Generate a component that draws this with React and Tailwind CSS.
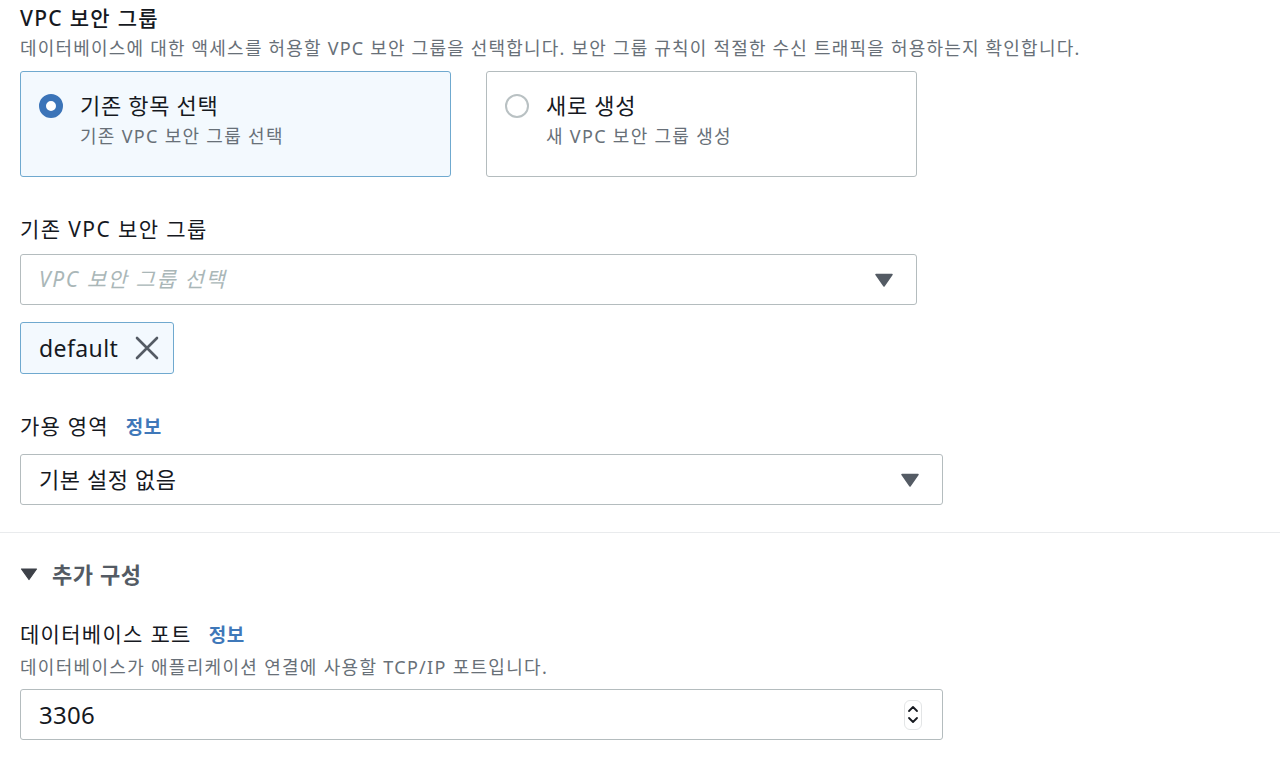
import React from 'react';

const font = { fontFamily: '"Noto Sans", "Noto Sans CJK KR", sans-serif' };

function Caret() {
  return (
    <svg width="18" height="14" viewBox="0 0 18 14">
      <path d="M1 1.5 H17 L9 13 Z" fill="#545b64" strokeLinejoin="round" stroke="#545b64" strokeWidth="1.5" />
    </svg>
  );
}

function Info() {
  return <span className="text-[19px] font-bold text-[#3f78b9] ml-[17px] tracking-[0.5px]">정보</span>;
}

function RadioCard({ selected, title, sub }) {
  return (
    <div
      className={
        selected
          ? 'w-[431px] h-[106px] rounded-[3px] border border-[#6fa9cf] bg-[#f3f9fe] flex items-start pl-[18px] pt-[18px]'
          : 'w-[431px] h-[106px] rounded-[3px] border border-[#b4bcbe] bg-white flex items-start pl-[18px] pt-[18px]'
      }
    >
      <div className="pt-[4px]">
        {selected ? (
          <div className="w-[24px] h-[24px] rounded-full border-[7px] border-[#3b74b8] bg-white" />
        ) : (
          <div className="w-[24px] h-[24px] rounded-full border-2 border-[#b9c1c3] bg-white" />
        )}
      </div>
      <div className="ml-[17px] flex flex-col">
        <span className="text-[22px] leading-[30px] text-[#16191f] tracking-[0.7px]">{title}</span>
        <span className="text-[18px] leading-[26px] text-[#687078] tracking-[1.3px] mt-[3px]">{sub}</span>
      </div>
    </div>
  );
}

export default function App() {
  return (
    <div className="w-[1280px] h-[761px] bg-white overflow-hidden" style={font}>
      <div className="pl-[20px] pt-[3px]">
        <div className="text-[21px] leading-[30px] font-medium text-[#16191f] tracking-[1.3px]">VPC 보안 그룹</div>
        <div className="text-[18px] leading-[26px] text-[#687078] tracking-[1.2px] mt-[2px] whitespace-nowrap">
          데이터베이스에 대한 액세스를 허용할 VPC 보안 그룹을 선택합니다. 보안 그룹 규칙이 적절한 수신 트래픽을 허용하는지 확인합니다.
        </div>
        <div className="flex gap-[35px] mt-[10px]">
          <RadioCard selected title="기존 항목 선택" sub="기존 VPC 보안 그룹 선택" />
          <RadioCard title="새로 생성" sub="새 VPC 보안 그룹 생성" />
        </div>

        <div className="text-[21px] leading-[30px] text-[#16191f] tracking-[1.4px] mt-[37px]">기존 VPC 보안 그룹</div>
        <div className="w-[897px] h-[51px] mt-[10px] rounded-[3px] border border-[#b4bcbe] flex items-center justify-between pl-[18px] pr-[23px]">
          <span className="text-[21px] italic text-[#aab7b8] tracking-[1.6px]">VPC 보안 그룹 선택</span>
          <Caret />
        </div>
        <div className="mt-[17px] w-[154px] h-[52px] rounded-[3px] border border-[#6fa9cf] bg-[#f3f9fe] flex items-center pl-[18px]">
          <span className="text-[23px] text-[#16191f] tracking-[0.4px]">default</span>
          <svg width="24" height="24" viewBox="0 0 24 24" className="ml-[17px]">
            <path d="M2 2 L22 22 M22 2 L2 22" stroke="#545b64" strokeWidth="2.6" strokeLinecap="round" />
          </svg>
        </div>

        <div className="flex items-center mt-[37px] h-[32px]">
          <span className="text-[21px] text-[#16191f] tracking-[1.2px]">가용 영역</span>
          <Info />
        </div>
        <div className="w-[923px] h-[51px] mt-[11px] rounded-[3px] border border-[#b4bcbe] flex items-center justify-between pl-[18px] pr-[23px]">
          <span className="text-[22px] text-[#16191f] tracking-[0.6px]">기본 설정 없음</span>
          <Caret />
        </div>
      </div>

      <div className="h-px bg-[#e9ebed] mt-[27px]" />

      <div className="pl-[20px]">
        <div className="flex items-center mt-[25px] h-[32px]">
          <svg width="18" height="14" viewBox="0 0 18 14">
            <path d="M1.5 2 H16.5 L9 12.5 Z" fill="#3d4148" stroke="#3d4148" strokeWidth="1.2" strokeLinejoin="round" />
          </svg>
          <span className="ml-[14px] text-[22px] font-bold text-[#545b64] tracking-[0.6px]">추가 구성</span>
        </div>

        <div className="flex items-center mt-[29px] h-[32px]">
          <span className="text-[21px] text-[#16191f] tracking-[1.3px]">데이터베이스 포트</span>
          <Info />
        </div>
        <div className="text-[18px] leading-[26px] text-[#687078] tracking-[1.3px] mt-[3px]">데이터베이스가 애플리케이션 연결에 사용할 TCP/IP 포트입니다.</div>
        <div className="w-[923px] h-[51px] mt-[9px] rounded-[3px] border border-[#b4bcbe] flex items-center justify-between pl-[18px] pr-[20px]">
          <span className="text-[24px] text-[#16191f] tracking-[0.3px]">3306</span>
          <div className="w-[18px] h-[30px] rounded-[6px] border border-[#e3e5e6] flex flex-col items-center justify-center gap-[3px]">
            <svg width="12" height="8" viewBox="0 0 12 8">
              <path d="M2 6 L6 2 L10 6" fill="none" stroke="#16191f" strokeWidth="1.8" strokeLinecap="round" strokeLinejoin="round" />
            </svg>
            <svg width="12" height="8" viewBox="0 0 12 8">
              <path d="M2 2 L6 6 L10 2" fill="none" stroke="#16191f" strokeWidth="1.8" strokeLinecap="round" strokeLinejoin="round" />
            </svg>
          </div>
        </div>
      </div>
    </div>
  );
}
